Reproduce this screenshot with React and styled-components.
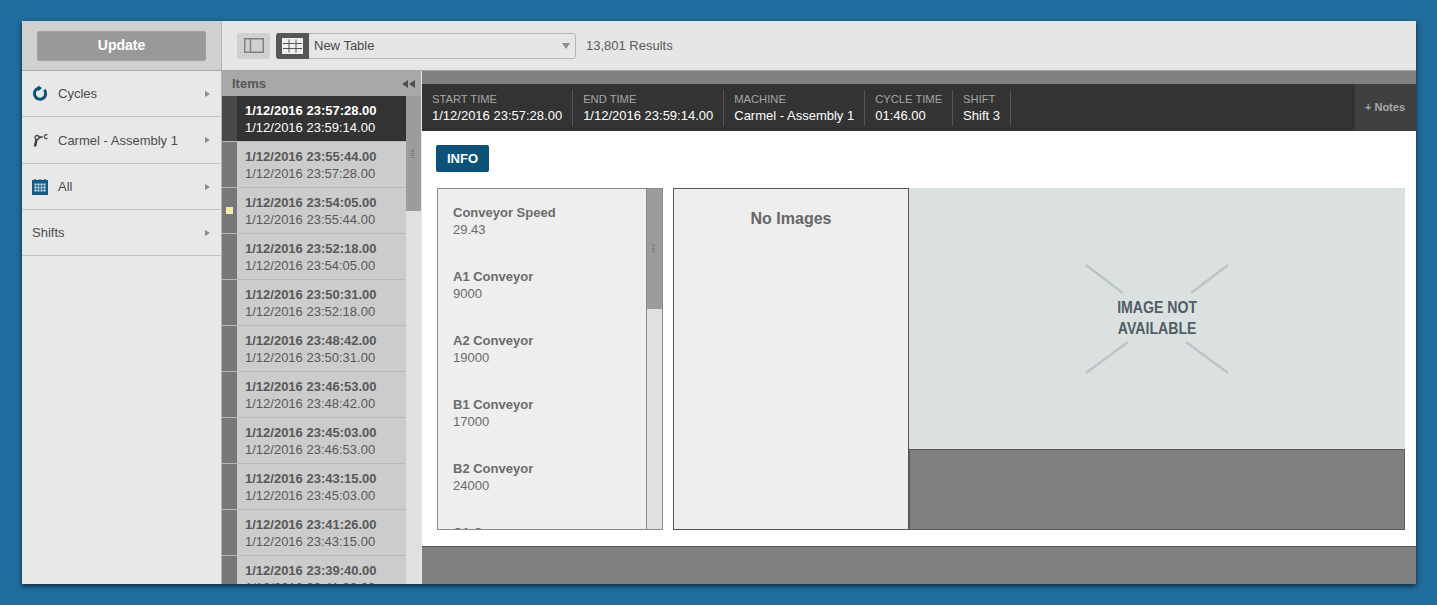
import styled, { createGlobalStyle } from "styled-components"

const GlobalStyle = createGlobalStyle`
    html, body {
        margin: 0;
        height: 100%;
        background: #206d9e;
        overflow: hidden;
    }
    body {
        font-family: "Liberation Sans", Arial, sans-serif;
    }
`;
const Page = styled.div`
    padding: 21px 0 0 22px;
`;
const Window = styled.div`
    width: 1394px;
    height: 563px;
    display: flex;
    flex-direction: column;
    overflow: hidden;
    background: #e8e8e8;
    box-shadow: 0 2px 5px rgba(0,0,0,0.65);
`;
const TopBar = styled.div`
    height: 49px;
    flex: none;
    display: flex;
    background: #e6e6e6;
    border-bottom: 1px solid #a6a6a6;
`;
const UpdateCell = styled.div`
    width: 199px;
    flex: none;
    display: flex;
    align-items: center;
    justify-content: center;
    background: #d0d0d0;
    border-right: 1px solid #b4b4b4;
`;
const UpdateButton = styled.button`
    width: 169px;
    height: 30px;
    padding: 0 0 2px;
    border: 1px solid #a2a2a2;
    border-radius: 2px;
    background: #999;
    color: #fff;
    font: 700 14px "Liberation Sans", Arial, sans-serif;
`;
const Toolbar = styled.div`
    flex: 1;
    display: flex;
    align-items: center;
    padding-left: 15px;
`;
const PanelToggle = styled.div`
    width: 33px;
    height: 26px;
    display: flex;
    align-items: center;
    justify-content: center;
    margin-right: 6px;
    background: #d0d0d0;
    border-radius: 3px;
`;
const TableSelect = styled.div`
    width: 300px;
    height: 26px;
    display: flex;
    align-items: center;
    box-sizing: border-box;
    border: 1px solid #b6b6b6;
    border-radius: 3px;
    color: #4a4a4a;
    font-size: 13px;
`;
const TableIcon = styled.div`
    width: 33px;
    height: 26px;
    margin: -1px 0 -1px -1px;
    display: flex;
    align-items: center;
    justify-content: center;
    flex: none;
    background: #565656;
    border-radius: 3px 0 0 3px;
`;
const SelectName = styled.span`
    flex: 1;
    padding-left: 5px;
`;
const SelectCaret = styled.span`
    width: 0;
    height: 0;
    margin-right: 5px;
    border-left: 4px solid transparent;
    border-right: 4px solid transparent;
    border-top: 6px solid #8c8c8c;
`;
const Results = styled.span`
    margin-left: 10px;
    color: #5a5a5a;
    font-size: 13px;
`;
const Body = styled.div`
    flex: 1;
    min-height: 0;
    display: flex;
`;
const Sidebar = styled.div`
    width: 199px;
    flex: none;
    border-right: 1px solid #b4b4b4;
    background: #e8e8e8;
`;
const NavRow = styled.div`
    height: ${(props) => props.$tall ? 46 : 45}px;
    display: flex;
    align-items: center;
    padding: 0 11px 0 10px;
    border-bottom: 1px solid #c2c2c2;
    color: #4c4c4c;
    font-size: 13px;
`;
const NavIcon = styled.span`
    width: 16px;
    height: 18px;
    margin-right: 10px;
    display: flex;
    align-items: center;
    justify-content: center;
`;
const NavLabel = styled.span`
    flex: 1;
`;
const Arrow = styled.span`
    width: 0;
    height: 0;
    border-top: 3.5px solid transparent;
    border-bottom: 3.5px solid transparent;
    border-left: 5px solid #8a8a8a;
`;
const ItemsColumn = styled.div`
    width: 199px;
    flex: none;
    display: flex;
    flex-direction: column;
    min-height: 0;
`;
const ItemsHeader = styled.div`
    height: 25px;
    flex: none;
    display: flex;
    align-items: center;
    justify-content: space-between;
    padding: 0 6px 0 10px;
    background: #a8a8a8;
    color: #565656;
    font-size: 13px;
    font-weight: 700;
`;
const Collapse = styled.span`
    display: flex;
    gap: 1px;
`;
const CollapseTip = styled.i`
    width: 0;
    height: 0;
    border-top: 4px solid transparent;
    border-bottom: 4px solid transparent;
    border-right: 6px solid #4e4e4e;
`;
const ItemsBody = styled.div`
    flex: 1;
    min-height: 0;
    display: flex;
`;
const ItemsList = styled.div`
    width: 184px;
    flex: none;
    overflow: hidden;
    background: #ccc;
`;
const Item = styled.div`
    height: 46px;
    box-sizing: border-box;
    display: flex;
    border-bottom: 1px solid #b8b8b8;
    background: ${(props) => props.$active ? "#333" : "#ccc"};
    color: ${(props) => props.$active ? "#fff" : "#585858"};
    font-size: 13px;
    line-height: 17px;
`;
const ItemGutter = styled.div`
    width: 15px;
    flex: none;
    display: flex;
    align-items: center;
    justify-content: center;
    background: ${(props) => props.$active ? "#484848" : "#777"};
`;
const Flag = styled.span`
    width: 7px;
    height: 7px;
    box-sizing: border-box;
    border: 1px solid #e8e8e8;
    background: #f7f17e;
`;
const ItemText = styled.div`
    padding: 6px 0 0 8px;
`;
const ItemStart = styled.div`
    font-weight: 700;
`;
const Scrollbar = styled.div`
    width: ${(props) => props.$width}px;
    flex: none;
    box-sizing: border-box;
    background: #e0e0e0;
    border-left: ${(props) => props.$framed ? "1px solid #8a8a8a" : "none"};
`;
const ScrollThumb = styled.div`
    height: ${(props) => props.$height}px;
    display: flex;
    align-items: center;
    justify-content: center;
    background: #9c9c9c;
`;
const Grip = styled.div`
    width: 3px;
    height: 10px;
    margin-right: 3px;
    background: repeating-linear-gradient(#7c7c7c 0 1px, transparent 1px 2px);
`;
const Main = styled.div`
    flex: 1;
    min-width: 0;
    display: flex;
    flex-direction: column;
    margin-left: 1px;
    background: #808080;
    padding-top: 13px;
`;
const SummaryBar = styled.div`
    height: 47px;
    flex: none;
    display: flex;
    background: #333;
`;
const SummaryCell = styled.div`
    margin: 6px 0 5px;
    padding: 2px 10px 0;
    border-right: 1px solid #555;
`;
const SummaryLabel = styled.div`
    color: #a6a6a6;
    font-size: 11.2px;
    line-height: 15px;
`;
const SummaryValue = styled.div`
    color: #fff;
    font-size: 13px;
    line-height: 17px;
    white-space: nowrap;
`;
const Notes = styled.div`
    width: 61px;
    margin-left: auto;
    padding: 0 1px 2px 0;
    box-sizing: border-box;
    display: flex;
    align-items: center;
    justify-content: center;
    background: #404040;
    color: #aaa;
    font-size: 11px;
    font-weight: 700;
`;
const Content = styled.div`
    height: 416px;
    flex: none;
    box-sizing: border-box;
    padding: 14px 11px 16px 14px;
    display: flex;
    flex-direction: column;
    background: #fff;
    border-bottom: 1px solid #555;
`;
const TabButton = styled.div`
    width: 53px;
    height: 27px;
    flex: none;
    display: flex;
    align-items: center;
    justify-content: center;
    border-radius: 2px;
    background: #0b5279;
    color: #fff;
    font-size: 13px;
    font-weight: 700;
`;
const Panels = styled.div`
    height: 342px;
    flex: none;
    margin: 16px 0 0 1px;
    display: flex;
    gap: 10px;
`;
const FieldsPanel = styled.div`
    width: 226px;
    flex: none;
    display: flex;
    box-sizing: border-box;
    border: 1px solid #8a8a8a;
    background: #eee;
`;
const Fields = styled.div`
    flex: 1;
    min-width: 0;
    overflow: hidden;
    padding: 15px 0 0 15px;
`;
const Field = styled.div`
    height: 64px;
    color: #6b6b6b;
    font-size: 13px;
    line-height: 17px;
`;
const FieldName = styled.div`
    font-weight: 700;
`;
const ImagesPanel = styled.div`
    flex: 1;
    min-width: 0;
    display: flex;
`;
const ImageList = styled.div`
    width: 236px;
    flex: none;
    box-sizing: border-box;
    padding-top: 21px;
    border: 1px solid #555;
    background: #eee;
    color: #666;
    font-size: 16px;
    font-weight: 700;
    text-align: center;
`;
const Viewer = styled.div`
    flex: 1;
    min-width: 0;
    display: flex;
    flex-direction: column;
`;
const Placeholder = styled.div`
    height: 261px;
    flex: none;
    display: flex;
    align-items: center;
    justify-content: center;
    background: #dbe1e1;
`;
const PlaceholderMark = styled.div`
    position: relative;
    width: 144px;
    height: 110px;
    display: flex;
    align-items: center;
    justify-content: center;
    color: #515d65;
    font-size: 17px;
    font-weight: 700;
    line-height: 21px;
    text-align: center;
`;
const Cross = styled.svg`
    position: absolute;
    inset: 0;
`;
const Squeezed = styled.span`
    display: inline-block;
    margin-bottom: 2px;
    white-space: nowrap;
    transform: scaleX(0.83);
`;
const Filmstrip = styled.div`
    flex: 1;
    background: #808080;
    border: 1px solid #5c5c5c;
`;

const items = [
    ["1/12/2016 23:57:28.00", "1/12/2016 23:59:14.00"],
    ["1/12/2016 23:55:44.00", "1/12/2016 23:57:28.00"],
    ["1/12/2016 23:54:05.00", "1/12/2016 23:55:44.00"],
    ["1/12/2016 23:52:18.00", "1/12/2016 23:54:05.00"],
    ["1/12/2016 23:50:31.00", "1/12/2016 23:52:18.00"],
    ["1/12/2016 23:48:42.00", "1/12/2016 23:50:31.00"],
    ["1/12/2016 23:46:53.00", "1/12/2016 23:48:42.00"],
    ["1/12/2016 23:45:03.00", "1/12/2016 23:46:53.00"],
    ["1/12/2016 23:43:15.00", "1/12/2016 23:45:03.00"],
    ["1/12/2016 23:41:26.00", "1/12/2016 23:43:15.00"],
    ["1/12/2016 23:39:40.00", "1/12/2016 23:41:26.00"],
];

const summary = [
    ["START TIME", "1/12/2016 23:57:28.00"],
    ["END TIME", "1/12/2016 23:59:14.00"],
    ["MACHINE", "Carmel - Assembly 1"],
    ["CYCLE TIME", "01:46.00"],
    ["SHIFT", "Shift 3"],
];

const fields = [
    ["Conveyor Speed", "29.43"],
    ["A1 Conveyor", "9000"],
    ["A2 Conveyor", "19000"],
    ["B1 Conveyor", "17000"],
    ["B2 Conveyor", "24000"],
    ["C1 Conveyor", ""],
];

const CycleIcon = () => (
    <svg width="17" height="17" viewBox="0 0 17 17">
        <path d="M13.1 4.6A6 6 0 1 1 7.5 2.6" fill="none" stroke="#0b5279" strokeWidth="3.2" />
        <path d="M6.5 0L10.8 2.6L6.5 6z" fill="#0b5279" />
    </svg>
);

const RobotIcon = () => (
    <svg width="15" height="14" viewBox="0 0 15 14">
        <path d="M2 13.5L3.6 6" fill="none" stroke="#444" strokeWidth="2.6" />
        <path d="M5 4.6L9.5 3.8" fill="none" stroke="#444" strokeWidth="1.8" />
        <circle cx="4" cy="4.5" r="2" fill="#e8e8e8" stroke="#444" strokeWidth="1.3" />
        <path d="M14.5 2A2 2 0 1 0 14.5 5.2" fill="none" stroke="#444" strokeWidth="1.2" />
    </svg>
);

const CalendarIcon = () => (
    <svg width="16" height="16" viewBox="0 0 16 16">
        <rect x="0" y="1" width="16" height="15" fill="#115b87" />
        <path d="M3 0v2M8 0v2M13 0v2" stroke="#115b87" strokeWidth="1.5" />
        <path d="M2.5 5.5h11M2.5 8.5h11M2.5 11.5h11" stroke="#dfe9ef" strokeWidth="2" strokeDasharray="2 1" />
    </svg>
);

const PanelIcon = () => (
    <svg width="20" height="15" viewBox="0 0 20 15">
        <rect x="0.75" y="0.75" width="18.5" height="13.5" fill="none" stroke="#808080" strokeWidth="1.5" />
        <path d="M6.5 0.5v14" stroke="#808080" strokeWidth="1.5" />
    </svg>
);

const GridIcon = () => (
    <svg width="21" height="16" viewBox="0 0 21 16">
        <rect x="0" y="0" width="21" height="16" fill="#efefef" />
        <path d="M1 5.5h19M1 10.5h19M7 1.5v13M14 1.5v13" stroke="#565656" strokeWidth="1" />
    </svg>
);

const App = () => {
    return (
        <Page>
            <GlobalStyle />
            <Window>
                <TopBar>
                    <UpdateCell>
                        <UpdateButton>Update</UpdateButton>
                    </UpdateCell>
                    <Toolbar>
                        <PanelToggle><PanelIcon /></PanelToggle>
                        <TableSelect>
                            <TableIcon><GridIcon /></TableIcon>
                            <SelectName>New Table</SelectName>
                            <SelectCaret />
                        </TableSelect>
                        <Results>13,801 Results</Results>
                    </Toolbar>
                </TopBar>
                <Body>
                    <Sidebar>
                        <NavRow>
                            <NavIcon><CycleIcon /></NavIcon>
                            <NavLabel>Cycles</NavLabel>
                            <Arrow />
                        </NavRow>
                        <NavRow $tall>
                            <NavIcon><RobotIcon /></NavIcon>
                            <NavLabel>Carmel - Assembly 1</NavLabel>
                            <Arrow />
                        </NavRow>
                        <NavRow>
                            <NavIcon><CalendarIcon /></NavIcon>
                            <NavLabel>All</NavLabel>
                            <Arrow />
                        </NavRow>
                        <NavRow>
                            <NavLabel>Shifts</NavLabel>
                            <Arrow />
                        </NavRow>
                    </Sidebar>
                    <ItemsColumn>
                        <ItemsHeader>
                            Items
                            <Collapse><CollapseTip /><CollapseTip /></Collapse>
                        </ItemsHeader>
                        <ItemsBody>
                            <ItemsList>
                                {items.map(([start, end], i) => (
                                    <Item key={start} $active={i === 0}>
                                        <ItemGutter $active={i === 0}>{i === 2 && <Flag />}</ItemGutter>
                                        <ItemText>
                                            <ItemStart>{start}</ItemStart>
                                            <div>{end}</div>
                                        </ItemText>
                                    </Item>
                                ))}
                            </ItemsList>
                            <Scrollbar $width={15}>
                                <ScrollThumb $height={115}><Grip /></ScrollThumb>
                            </Scrollbar>
                        </ItemsBody>
                    </ItemsColumn>
                    <Main>
                        <SummaryBar>
                            {summary.map(([label, value]) => (
                                <SummaryCell key={label}>
                                    <SummaryLabel>{label}</SummaryLabel>
                                    <SummaryValue>{value}</SummaryValue>
                                </SummaryCell>
                            ))}
                            <Notes>+ Notes</Notes>
                        </SummaryBar>
                        <Content>
                            <TabButton>INFO</TabButton>
                            <Panels>
                                <FieldsPanel>
                                    <Fields>
                                        {fields.map(([name, value]) => (
                                            <Field key={name}>
                                                <FieldName>{name}</FieldName>
                                                <div>{value}</div>
                                            </Field>
                                        ))}
                                    </Fields>
                                    <Scrollbar $width={16} $framed>
                                        <ScrollThumb $height={120}><Grip /></ScrollThumb>
                                    </Scrollbar>
                                </FieldsPanel>
                                <ImagesPanel>
                                    <ImageList>No Images</ImageList>
                                    <Viewer>
                                        <Placeholder>
                                            <PlaceholderMark>
                                                <Cross width="144" height="110" viewBox="0 0 144 110">
                                                    <path d="M1 1L38 29M143 1L106 29M1 109L43 78M143 109L101 78" stroke="#bcc5c5" strokeWidth="2.5" />
                                                </Cross>
                                                <Squeezed>IMAGE NOT<br />AVAILABLE</Squeezed>
                                            </PlaceholderMark>
                                        </Placeholder>
                                        <Filmstrip />
                                    </Viewer>
                                </ImagesPanel>
                            </Panels>
                        </Content>
                    </Main>
                </Body>
            </Window>
        </Page>
    )
};

export default App;
